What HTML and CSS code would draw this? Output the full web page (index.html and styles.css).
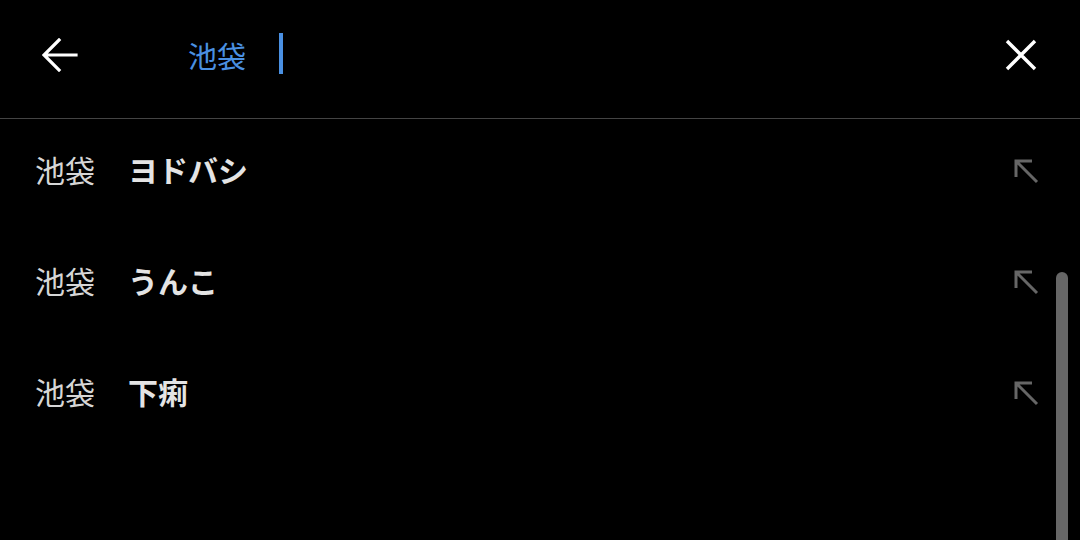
FILE: index.html
```html
<!DOCTYPE html>
<html lang="ja">
<head>
    <meta charset="UTF-8">
    <meta name="viewport" content="width=device-width, initial-scale=1.0">
    <title>検索</title>
    <link rel="stylesheet" href="styles.css">
</head>
<body>
    <div class="search-page">
        <!-- Barra de busca -->
        <header class="search-bar">
            <button class="icon-btn back-btn" aria-label="戻る">
                <svg width="36" height="34" viewBox="0 0 36 34">
                    <path d="M34 17H3M17 2L2 17l15 15" fill="none" stroke="#fff" stroke-width="3.2" stroke-linecap="square"/>
                </svg>
            </button>
            <div class="query">
                <span class="query-text">池袋</span>
                <span class="caret"></span>
            </div>
            <button class="icon-btn close-btn" aria-label="閉じる">
                <svg width="32" height="32" viewBox="0 0 32 32">
                    <path d="M2 2l28 28M30 2L2 30" fill="none" stroke="#fff" stroke-width="3.4"/>
                </svg>
            </button>
        </header>

        <!-- Sugestões -->
        <ul class="suggestions">
            <li class="suggestion">
                <span class="term">池袋</span><b class="rest">ヨドバシ</b>
                <svg class="fill-icon" width="26" height="26" viewBox="0 0 26 26">
                    <path d="M3 19V3h16M3 3l21 21" fill="none" stroke="#666" stroke-width="3"/>
                </svg>
            </li>
            <li class="suggestion">
                <span class="term">池袋</span><b class="rest">うんこ</b>
                <svg class="fill-icon" width="26" height="26" viewBox="0 0 26 26">
                    <path d="M3 19V3h16M3 3l21 21" fill="none" stroke="#666" stroke-width="3"/>
                </svg>
            </li>
            <li class="suggestion">
                <span class="term">池袋</span><b class="rest">下痢</b>
                <svg class="fill-icon" width="26" height="26" viewBox="0 0 26 26">
                    <path d="M3 19V3h16M3 3l21 21" fill="none" stroke="#666" stroke-width="3"/>
                </svg>
            </li>
        </ul>

        <div class="scrollbar"></div>
    </div>
</body>
</html>
```

FILE: styles.css
```css
/* Reset básico */
* {
    margin: 0;
    padding: 0;
    box-sizing: border-box;
}

body {
    font-family: 'Noto Sans CJK JP', 'Noto Sans', sans-serif;
    background: #000;
    color: #ddd;
    width: 1080px;
    height: 540px;
    overflow: hidden;
}

.search-page {
    position: relative;
    height: 540px;
}

/* Barra superior */
.search-bar {
    display: flex;
    align-items: center;
    height: 119px;
    border-bottom: 1px solid #444;
    padding: 0 42px 0 42px;
}

.icon-btn {
    background: none;
    border: none;
    display: flex;
    align-items: center;
    justify-content: center;
}

.back-btn {
    margin-top: -8px;
}

.query {
    flex: 1;
    display: flex;
    align-items: center;
    margin-left: 110px;
    margin-top: -8px;
}

.query-text {
    font-size: 29px;
    line-height: 1;
    color: #4a90e2;
}

.caret {
    width: 4px;
    height: 41px;
    background: #4a90e2;
    margin-left: 33px;
    margin-top: -3px;
}

.close-btn {
    margin-top: -8px;
    margin-right: 1px;
}

/* Lista de sugestões */
.suggestions {
    list-style: none;
    display: flex;
    flex-direction: column;
    gap: 7px;
}

.suggestion {
    display: flex;
    align-items: center;
    height: 104px;
    padding: 0 41px 4px 35px;
    font-size: 30px;
    line-height: 1;
}

.term {
    color: #d6d6d6;
}

.rest {
    color: #e4e4e4;
    font-weight: bold;
    margin-left: 33px;
    flex: 1;
}

.fill-icon {
    margin-top: 4px;
}

/* Barra de rolagem */
.scrollbar {
    position: absolute;
    top: 272px;
    right: 12px;
    bottom: -10px;
    width: 12px;
    border-radius: 6px;
    background: #666;
}
```
